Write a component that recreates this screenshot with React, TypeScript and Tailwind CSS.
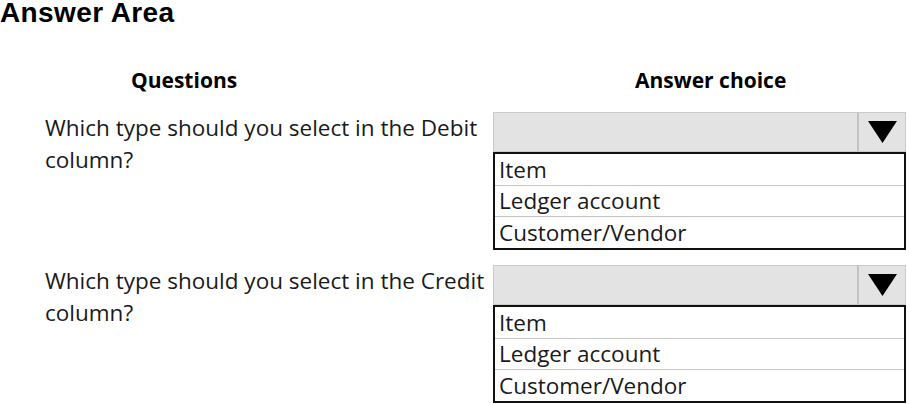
import React from "react";

const options = ["Item", "Ledger account", "Customer/Vendor"];

const questions = [
  { id: 1, line1: "Which type should you select in the Debit", line2: "column?" },
  { id: 2, line1: "Which type should you select in the Credit", line2: "column?" },
];

function Dropdown() {
  return (
    <div className="w-[413px] shrink-0">
      <div className="flex h-[40px] bg-[#e3e3e3] border border-[#cacaca]">
        <div className="flex-1" />
        <div className="w-[48px] border-l-2 border-[#c2c2c2] flex items-center justify-center">
          <svg width="29" height="22" viewBox="0 0 29 22">
            <polygon points="0,0 29,0 14.5,22" fill="#000" />
          </svg>
        </div>
      </div>
      <ul className="border-2 border-[#111] bg-white">
        {options.map((opt, i) => (
          <li
            key={opt}
            className={`pl-[4px] flex items-center text-[22.5px] text-[#1a1a1a] ${
              i === 0 ? "h-[32px]" : "h-[31px]"
            } ${i < options.length - 1 ? "border-b border-[#c4c4c4]" : ""}`}
          >
            {opt}
          </li>
        ))}
      </ul>
    </div>
  );
}

export default function App() {
  return (
    <div className="w-[909px] h-[404px] bg-white overflow-hidden font-['Open_Sans','Noto_Sans',sans-serif] text-[#1a1a1a]">
      <h1 className="font-['Liberation_Sans',Arial,sans-serif] font-bold text-[28px] leading-[26px] tracking-[0.4px] text-black">
        Answer Area
      </h1>

      {/* column headers */}
      <div className="flex mt-[39px] h-[32px] items-center font-bold text-[21px] text-black">
        <span className="w-[493px] pl-[131px]">Questions</span>
        <span className="pl-[142px]">Answer choice</span>
      </div>

      <div className="flex flex-col gap-[15px] mt-[15px]">
        {questions.map((q) => (
          <div key={q.id} className="flex">
            <p className="w-[493px] shrink-0 pl-[45px] text-[22.5px] leading-[32px] whitespace-nowrap">
              {q.line1}
              <br />
              {q.line2}
            </p>
            <Dropdown />
          </div>
        ))}
      </div>
    </div>
  );
}
